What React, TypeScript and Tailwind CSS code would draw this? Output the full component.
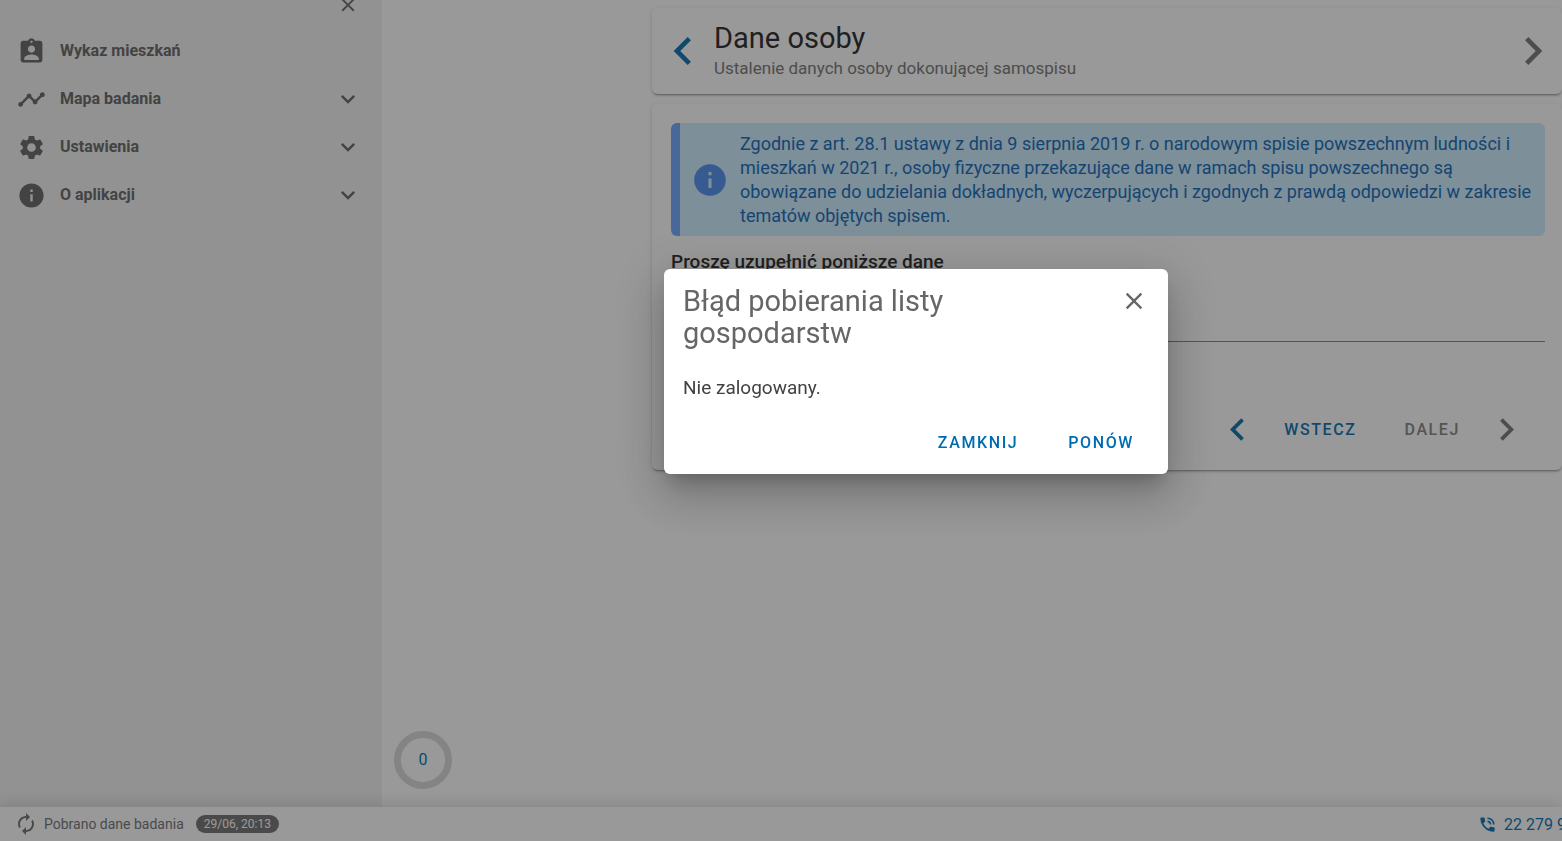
import React, { useState } from "react";
import {
  MdAssignmentInd,
  MdAutorenew,
  MdChevronLeft,
  MdChevronRight,
  MdClose,
  MdExpandMore,
  MdInfo,
  MdPhoneInTalk,
  MdSettings,
  MdTimeline,
} from "react-icons/md";
import type { IconType } from "react-icons";

type MenuItem = { label: string; icon: IconType; expandable: boolean };

const menu: MenuItem[] = [
  { label: "Wykaz mieszkań", icon: MdAssignmentInd, expandable: false },
  { label: "Mapa badania", icon: MdTimeline, expandable: true },
  { label: "Ustawienia", icon: MdSettings, expandable: true },
  { label: "O aplikacji", icon: MdInfo, expandable: true },
];

const cardClass =
  "rounded-md bg-white shadow-[0_3px_1px_-2px_rgba(0,0,0,0.2),0_2px_2px_0_rgba(0,0,0,0.14),0_1px_5px_0_rgba(0,0,0,0.12)]";

function Sidebar() {
  return (
    <aside className="flex w-[382px] shrink-0 flex-col overflow-hidden bg-[#f2f2f2] text-[#606060]">
      <div className="flex h-[27px] items-start justify-end pr-[23px]">
        <button type="button" aria-label="Zamknij menu" className="-mt-1.5">
          <MdClose className="size-[22px]" />
        </button>
      </div>
      <nav>
        {menu.map(({ label, icon: Icon, expandable }) => (
          <button
            key={label}
            type="button"
            className="flex h-12 w-full items-center pl-[17px] pr-5 text-left text-base font-bold"
          >
            <Icon className="size-[29px]" />
            <span className="ml-3.5 flex-1">{label}</span>
            {expandable && <MdExpandMore className="size-7" />}
          </button>
        ))}
      </nav>
    </aside>
  );
}

function PageHeader() {
  return (
    <header className={`${cardClass} flex h-[86px] items-center pl-[3px] pr-px`}>
      <button type="button" aria-label="Poprzednia strona" className="text-[#006cb0]">
        <MdChevronLeft className="size-14" />
      </button>
      <div className="ml-[3px] flex-1 pt-0.5">
        <h1 className="text-[29px] leading-8 text-[#212121]">Dane osoby</h1>
        <p className="text-[17px] leading-7 text-[#737373]">
          Ustalenie danych osoby dokonującej samospisu
        </p>
      </div>
      <button type="button" aria-label="Następna strona" className="text-[#737373]">
        <MdChevronRight className="size-14" />
      </button>
    </header>
  );
}

function PersonForm() {
  return (
    <form className={`${cardClass} pb-[18px] pl-[19px] pr-[17px] pt-[19px]`}>
      <div
        role="note"
        className="flex items-center rounded-md border-l-[9px] border-[#6aa5ff] bg-[#cbecfd] pb-2 pl-[11px] pr-3 pt-[9px]"
      >
        <MdInfo className="size-[38px] shrink-0 text-[#4b8cf0]" />
        <p className="ml-[11px] text-lg leading-6 text-[#0a64b8]">
          Zgodnie z art. 28.1 ustawy z dnia 9 sierpnia 2019 r. o narodowym spisie powszechnym
          ludności i mieszkań w 2021 r., osoby fizyczne przekazujące dane w ramach spisu
          powszechnego są obowiązane do udzielania dokładnych, wyczerpujących i zgodnych z prawdą
          odpowiedzi w zakresie tematów objętych spisem.
        </p>
      </div>
      <label htmlFor="person" className="mt-3 block text-[19px] font-medium leading-7 text-[#212121]">
        Proszę uzupełnić poniższe dane
      </label>
      <input
        id="person"
        type="text"
        className="mt-4 block h-[50px] w-full border-b border-[#808080] bg-transparent text-lg outline-none"
      />
      <div className="mt-[65px] flex items-center justify-end pr-4 text-base font-medium tracking-widest">
        <button type="button" className="flex items-center text-[#006cb0]">
          <MdChevronLeft className="size-[45px]" />
          <span className="ml-6">WSTECZ</span>
        </button>
        <button type="button" className="ml-12 flex items-center text-[#808080]">
          <span className="mr-6">DALEJ</span>
          <MdChevronRight className="size-[45px] text-[#737373]" />
        </button>
      </div>
    </form>
  );
}

function StatusBar() {
  return (
    <footer className="relative flex h-[34px] shrink-0 items-center whitespace-nowrap bg-white pl-3.5 text-[#6e6e6e] shadow-[0_-2px_16px_rgba(0,0,0,0.16)]">
      <MdAutorenew className="size-6" />
      <span className="ml-1.5 text-sm">Pobrano dane badania</span>
      <span className="ml-3 rounded-full bg-[#6e6e6e] px-2 text-xs leading-[18px] text-white">
        29/06, 20:13
      </span>
      <a href="tel:222799999" className="ml-auto flex w-[84px] items-center overflow-hidden text-[#006cb0]">
        <MdPhoneInTalk className="size-[19px] shrink-0" />
        <span className="ml-[7px] pt-px text-base">22 279 99 99</span>
      </a>
    </footer>
  );
}

function ErrorDialog({ onClose }: { onClose: () => void }) {
  return (
    <div className="fixed inset-0 flex items-center justify-center bg-[#212121]/46 pb-[98px] pl-[270px]">
      <div
        role="dialog"
        aria-modal="true"
        aria-labelledby="dialog-title"
        className="w-[504px] rounded-md bg-white pb-[11px] pt-4 shadow-[0_11px_15px_-7px_rgba(0,0,0,0.2),0_24px_38px_3px_rgba(0,0,0,0.14),0_9px_46px_8px_rgba(0,0,0,0.12)]"
      >
        <div className="flex items-start justify-between pl-[19px] pr-5">
          <h2 id="dialog-title" className="w-80 text-[29px] leading-8 text-[#666666]">
            Błąd pobierania listy gospodarstw
          </h2>
          <button type="button" aria-label="Zamknij" onClick={onClose} className="mt-0.5 text-[#666666]">
            <MdClose className="size-7" />
          </button>
        </div>
        <p className="mt-[25px] px-[19px] text-[19px] leading-7 text-[#424242]">
          Nie zalogowany.
        </p>
        <div className="mt-[21px] flex justify-end gap-4 pr-[17px] text-base font-medium text-[#006cb0]">
          <button type="button" onClick={onClose} className="h-10 px-[17px] tracking-widest">
            ZAMKNIJ
          </button>
          <button type="button" className="h-10 px-[17px] tracking-widest">
            PONÓW
          </button>
        </div>
      </div>
    </div>
  );
}

export default function App() {
  const [open, setOpen] = useState(true);
  return (
    <div className="flex h-screen flex-col overflow-hidden bg-white font-[Roboto,sans-serif]">
      <div className="flex min-h-0 flex-1">
        <Sidebar />
        <main className="flex min-w-0 flex-1">
          <div className="flex w-[270px] shrink-0 flex-col justify-end pb-[18px] pl-3">
            <div className="flex size-[58px] items-center justify-center rounded-full border-[7px] border-[#d8d8d8] text-base text-[#006cb0]">
              0
            </div>
          </div>
          <div className="flex min-w-0 flex-1 flex-col gap-2.5 pt-2">
            <PageHeader />
            <PersonForm />
          </div>
        </main>
      </div>
      <StatusBar />
      {open && <ErrorDialog onClose={() => setOpen(false)} />}
    </div>
  );
}
